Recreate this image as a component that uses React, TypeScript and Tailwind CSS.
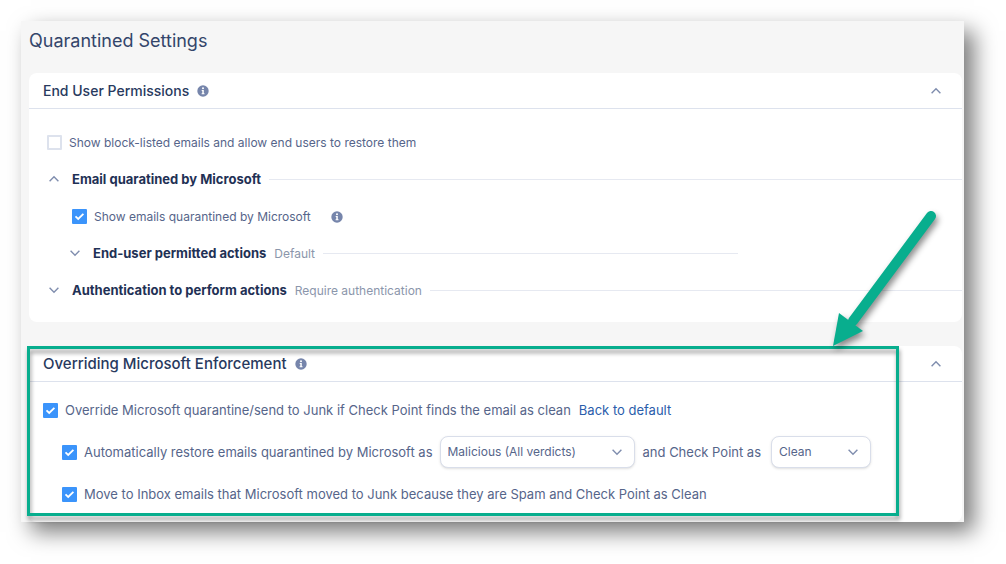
import type { ReactNode } from "react";

function InfoIcon({ className = "" }: { className?: string }) {
  return (
    <svg viewBox="0 0 12 12" className={`size-3 shrink-0 ${className}`} aria-hidden="true">
      <circle cx="6" cy="6" r="5.7" fill="#7685ab" />
      <circle cx="6" cy="3.2" r="1" fill="#fff" />
      <path d="M4.7 4.9h2.1v3.3h.7v1.1H4.6V8.200h.7V6h-.6z" fill="#fff" />
    </svg>
  );
}

function Chevron({ up = false, className = "" }: { up?: boolean; className?: string }) {
  return (
    <svg viewBox="0 0 12 12" className={`size-3 shrink-0 ${className}`} aria-hidden="true">
      <path
        d={up ? "M1.600 8.200l4.400-4.400 4.400 4.400" : "M1.600 3.800l4.400 4.400 4.400-4.400"}
        fill="none"
        stroke="#7f8dae"
        strokeWidth="1.4"
      />
    </svg>
  );
}

function Check({ label, checked = false }: { label: string; checked?: boolean }) {
  return (
    <label className="flex items-center gap-[7px] whitespace-nowrap">
      <span className="grid size-[15px] place-items-center">
        <input
          type="checkbox"
          defaultChecked={checked}
          className="peer col-start-1 row-start-1 size-[15px] appearance-none rounded-[1px] border-2 border-[#dde2ed] bg-white checked:border-[#3b94fb] checked:bg-[#3b94fb]"
        />
        <svg
          viewBox="0 0 15 15"
          className="pointer-events-none invisible col-start-1 row-start-1 size-[15px] peer-checked:visible"
          aria-hidden="true"
        >
          <path d="M3.5 7.4l2.7 2.6 5.2-5.2" fill="none" stroke="#fff" strokeWidth="1.8" />
        </svg>
      </span>
      {label}
    </label>
  );
}

function Group({
  title,
  value,
  up = false,
  className = "",
}: {
  title: string;
  value?: string;
  up?: boolean;
  className?: string;
}) {
  return (
    <div className={`flex h-[37px] items-center gap-2 ${className}`}>
      <button
        type="button"
        aria-expanded={up}
        className="flex items-center gap-3 text-[13px] font-bold whitespace-nowrap text-[#1f3155]"
      >
        <Chevron up={up} />
        {title}
      </button>
      {value && <span className="whitespace-nowrap text-[#8b96ab]">{value}</span>}
      <span className="h-px flex-1 bg-[#e6e9f1]" />
    </div>
  );
}

function Card({ title, titleClass, children }: { title: string; titleClass: string; children: ReactNode }) {
  return (
    <section className="rounded-lg bg-white">
      <header className="flex h-9 items-center border-b border-[#dde2ed] pr-5 pl-3.5">
        <h2 className={`font-medium text-[#283a5e] ${titleClass}`}>{title}</h2>
        <InfoIcon className="ml-2" />
        <button type="button" aria-label={`Collapse ${title}`} className="ml-auto">
          <Chevron up />
        </button>
      </header>
      {children}
    </section>
  );
}

function Select({ label, options, className }: { label: string; options: string[]; className: string }) {
  return (
    <span className={`grid items-center ${className}`}>
      <select
        aria-label={label}
        className="col-start-1 row-start-1 h-8 w-full appearance-none rounded-lg border border-[#d9deea] bg-white pr-8 pl-[7px] text-xs shadow-sm"
      >
        {options.map((o) => (
          <option key={o}>{o}</option>
        ))}
      </select>
      <Chevron className="pointer-events-none col-start-1 row-start-1 mr-3 justify-self-end" />
    </span>
  );
}

export default function App() {
  return (
    <div className="p-[21px] pr-[42px] pb-[42px] font-['Inter',sans-serif] text-[13px] leading-4 text-[#56658a]">
      <main className="bg-[#f6f6f6] pr-0.5 pl-2 shadow-[10px_10px_21px_rgba(0,0,0,0.52)]">
        <h1 className="flex h-[52px] items-center pb-3 text-lg text-[#33456a]">Quarantined Settings</h1>
        <div className="flex flex-col gap-6">
          <Card title="End User Permissions" titleClass="text-sm">
            <div className="pt-[15px] pb-[13px] pl-[18px] text-xs">
              <div className="flex h-[37px] items-center">
                <Check label="Show block-listed emails and allow end users to restore them" />
              </div>
              <Group up title="Email quaratined by Microsoft" className="pl-px" />
              <div className="flex h-[37px] items-center gap-5 pl-[25px]">
                <Check checked label="Show emails quarantined by Microsoft" />
                <InfoIcon />
              </div>
              <Group title="End-user permitted actions" value="Default" className="mr-56 pl-[22px]" />
              <Group title="Authentication to perform actions" value="Require authentication" className="pl-px" />
            </div>
          </Card>
          <div className="relative">
            <Card title="Overriding Microsoft Enforcement" titleClass="text-[15px]">
              <div className="pt-[7px] pb-[7px] pl-3.5">
                <div className="flex h-[42px] items-center gap-2">
                  <Check checked label="Override Microsoft quarantine/send to Junk if Check Point finds the email as clean" />
                  <a href="#default" className="whitespace-nowrap text-[#2a5dab]">
                    Back to default
                  </a>
                </div>
                <div className="flex h-[42px] items-center pl-[19px]">
                  <Check checked label="Automatically restore emails quarantined by Microsoft as" />
                  <Select
                    label="Microsoft verdict"
                    options={["Malicious (All verdicts)", "Spam"]}
                    className="mr-2 ml-[7px] w-[195px]"
                  />
                  <span className="whitespace-nowrap">and Check Point as</span>
                  <Select label="Check Point verdict" options={["Clean", "Spam"]} className="ml-2.5 w-[100px]" />
                </div>
                <div className="flex h-[42px] items-center pl-[19px]">
                  <Check checked label="Move to Inbox emails that Microsoft moved to Junk because they are Spam and Check Point as Clean" />
                </div>
              </div>
            </Card>
            <div className="pointer-events-none absolute top-0 right-[63px] bottom-1.5 -left-0.5 border-3 border-[#08ae8e] drop-shadow-[1px_4px_2px_rgba(0,0,0,0.4)]" />
            <svg
              viewBox="0 0 120 160"
              className="pointer-events-none absolute right-[15px] bottom-[169px] h-[160px] w-[120px] drop-shadow-[2px_4px_3px_rgba(0,0,0,0.45)]"
              aria-hidden="true"
            >
              <path d="M104 23L26 128" stroke="#08ae8e" strokeWidth="10" strokeLinecap="round" />
              <path d="M6 153L12 120L36 138z" fill="#08ae8e" />
            </svg>
          </div>
        </div>
      </main>
    </div>
  );
}
